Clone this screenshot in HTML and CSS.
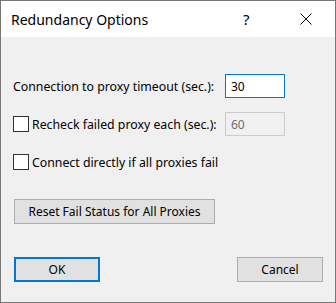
FILE: index.html
```html
<!DOCTYPE html>
<html lang="en">
<head>
    <meta charset="UTF-8">
    <title>Redundancy Options</title>
    <link rel="stylesheet" href="styles.css">
</head>
<body>
    <div class="dialog">
        <div class="titlebar">
            <span class="title">Redundancy Options</span>
            <span class="help">?</span>
            <span class="close">
                <svg width="12" height="12" viewBox="0 0 12 12">
                    <path d="M0.5 0.5 L11.5 11.5 M11.5 0.5 L0.5 11.5" stroke="#000" stroke-width="1" fill="none"/>
                </svg>
            </span>
        </div>

        <div class="content">
            <!-- timeout -->
            <div class="row">
                <span class="label">Connection to proxy timeout (sec.):</span>
                <input class="field" type="text" value="30">
            </div>

            <!-- recheck -->
            <div class="row">
                <span class="check"></span>
                <span class="label">Recheck failed proxy each (sec.):</span>
                <input class="field disabled" type="text" value="60" disabled>
            </div>

            <!-- direct -->
            <div class="row">
                <span class="check"></span>
                <span class="label">Connect directly if all proxies fail</span>
            </div>

            <button class="button reset">Reset Fail Status for All Proxies</button>

            <div class="footer">
                <button class="button default">OK</button>
                <button class="button">Cancel</button>
            </div>
        </div>
    </div>
</body>
</html>
```

FILE: styles.css
```css
body {
    margin: 0;
    font-family: "Noto Sans", Arial, sans-serif;
    font-size: 12px;
    color: #000;
}

.dialog {
    width: 336px;
    height: 303px;
    box-sizing: border-box;
    border: 1px solid #777777;
    background-color: #f0f0f0;
    display: flex;
    flex-direction: column;
}

.titlebar {
    height: 36px;
    background-color: white;
    display: flex;
    align-items: center;
}

.title {
    font-size: 14px;
    margin-left: 10px;
    flex: 1;
}

.help {
    font-size: 15px;
    width: 10px;
    margin-right: 47px;
}

.close {
    width: 12px;
    height: 12px;
    margin-right: 23px;
    display: flex;
}

.content {
    padding: 37px 12px 0 12px;
    display: flex;
    flex-direction: column;
}

.row {
    width: 272px;
    height: 24px;
    display: flex;
    align-items: center;
    margin-bottom: 14px;
}

.label {
    font-size: 12.3px;
}

.check {
    width: 16px;
    height: 16px;
    box-sizing: border-box;
    border: 1px solid #333333;
    background-color: white;
    margin-right: 3px;
}

.field {
    width: 60px;
    height: 24px;
    margin-left: auto;
    box-sizing: border-box;
    border: 1px solid #0078d7;
    background-color: white;
    padding: 0 5px;
    font-family: inherit;
    font-size: 12px;
    color: #000;
    outline: none;
}

.field.disabled {
    border-color: #cccccc;
    background-color: #f0f0f0;
    color: #6d6d6d;
}

.button {
    height: 25px;
    box-sizing: border-box;
    border: 1px solid #adadad;
    background-color: #e1e1e1;
    font-family: inherit;
    font-size: 12px;
    color: #000;
    padding: 0;
    width: 86px;
}

.reset {
    width: 201px;
    margin: 11px 0 0 1px;
}

.footer {
    display: flex;
    justify-content: space-between;
    margin: 33px 0 0 1px;
}

.default {
    border: 2px solid #0078d7;
}
```
